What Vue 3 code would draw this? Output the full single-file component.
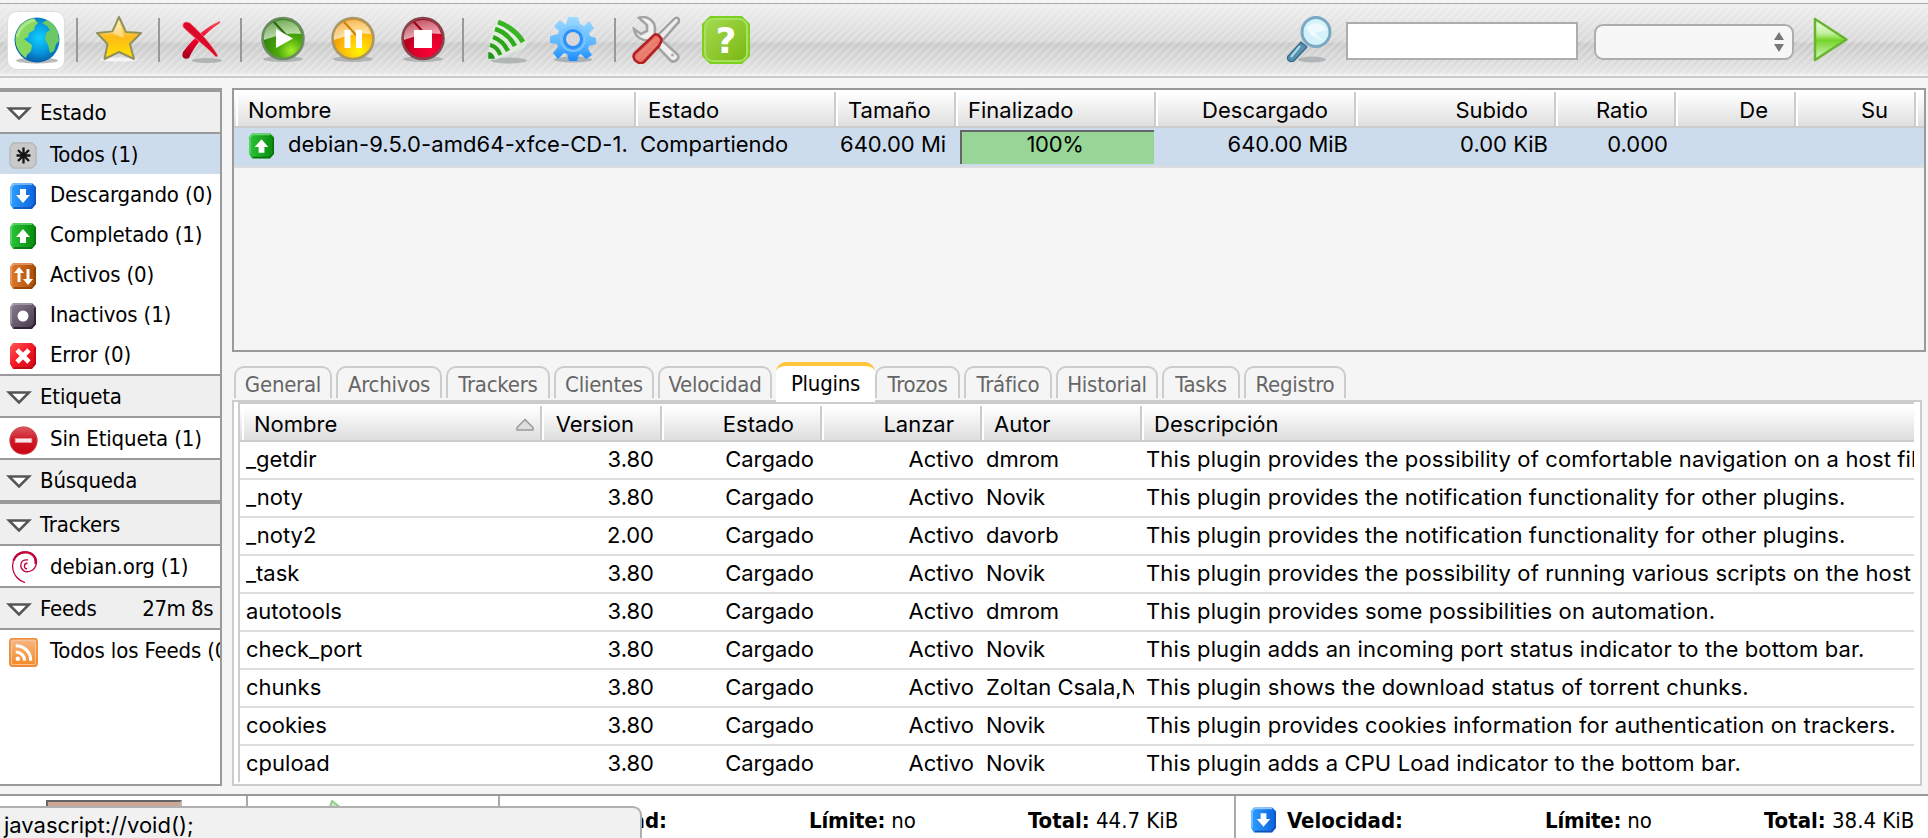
<script setup>
const states = [
  { label: 'Todos (1)', icon: 'all', active: true },
  { label: 'Descargando (0)', icon: 'down' },
  { label: 'Completado (1)', icon: 'up' },
  { label: 'Activos (0)', icon: 'both' },
  { label: 'Inactivos (1)', icon: 'idle' },
  { label: 'Error (0)', icon: 'error' },
]
const sections = [
  { title: 'Estado', rows: states },
  { title: 'Etiqueta', rows: [{ label: 'Sin Etiqueta (1)', icon: 'minus' }] },
  { title: 'Búsqueda', rows: [], empty: true },
  { title: 'Trackers', rows: [{ label: 'debian.org (1)', icon: 'debian' }] },
  { title: 'Feeds', extra: '27m 8s', rows: [{ label: 'Todos los Feeds (0)', icon: 'feed' }] },
]
const columns = [
  { t: 'Nombre' }, { t: 'Estado' }, { t: 'Tamaño', r: true }, { t: 'Finalizado' }, { t: 'Descargado', r: true },
  { t: 'Subido', r: true }, { t: 'Ratio', r: true }, { t: 'De', r: true }, { t: 'Su', r: true }, { t: '' },
]
const tabs = [
  ['General', 98], ['Archivos', 106], ['Trackers', 104], ['Clientes', 100], ['Velocidad', 114], ['Plugins', 99],
  ['Trozos', 85], ['Tráfico', 88], ['Historial', 102], ['Tasks', 78], ['Registro', 102],
]
const pluginColumns = [
  { t: 'Nombre', sort: true }, { t: 'Version', r: true }, { t: 'Estado', r: true }, { t: 'Lanzar', r: true },
  { t: 'Autor' }, { t: 'Descripción' },
]
const P = 'This plugin '
const plugins = [
  ['_getdir', '3.80', 'dmrom', P + 'provides the possibility of comfortable navigation on a host file system.'],
  ['_noty', '3.80', 'Novik', P + 'provides the notification functionality for other plugins.'],
  ['_noty2', '2.00', 'davorb', P + 'provides the notification functionality for other plugins.'],
  ['_task', '3.80', 'Novik', P + 'provides the possibility of running various scripts on the host system.'],
  ['autotools', '3.80', 'dmrom', P + 'provides some possibilities on automation.'],
  ['check_port', '3.80', 'Novik', P + 'adds an incoming port status indicator to the bottom bar.'],
  ['chunks', '3.80', 'Zoltan Csala,Novik', P + 'shows the download status of torrent chunks.'],
  ['cookies', '3.80', 'Novik', P + 'provides cookies information for authentication on trackers.'],
  ['cpuload', '3.80', 'Novik', P + 'adds a CPU Load indicator to the bottom bar.'],
]
</script>

<template>
  <div class="app">
    <svg class="defs" width="0" height="0">
      <defs>
        <radialGradient id="gGlobe" cx=".55" cy=".45" r=".6"><stop offset="0" stop-color="#10d0ff" /><stop offset=".55" stop-color="#0795dc" /><stop offset="1" stop-color="#04549c" /></radialGradient>
        <linearGradient id="gStar" x1="0" y1="0" x2="0" y2="1"><stop offset="0" stop-color="#ffe9a0" /><stop offset=".5" stop-color="#fdbb16" /><stop offset="1" stop-color="#ffe400" /></linearGradient>
        <linearGradient id="gRed" x1="0" y1="0" x2="0" y2="1"><stop offset="0" stop-color="#f05058" /><stop offset=".5" stop-color="#f4002c" /><stop offset="1" stop-color="#a00018" /></linearGradient>
        <radialGradient id="gPlay" cx=".7" cy=".8" r=".8"><stop offset="0" stop-color="#a4f028" /><stop offset=".4" stop-color="#4ba80c" /><stop offset="1" stop-color="#2b7a08" /></radialGradient>
        <radialGradient id="gPause" cx=".65" cy=".8" r=".8"><stop offset="0" stop-color="#fff400" /><stop offset=".45" stop-color="#ffc20a" /><stop offset="1" stop-color="#f08c00" /></radialGradient>
        <radialGradient id="gStop" cx=".7" cy=".8" r=".8"><stop offset="0" stop-color="#ff0038" /><stop offset=".5" stop-color="#dc0028" /><stop offset="1" stop-color="#9c0014" /></radialGradient>
        <linearGradient id="gGloss" x1="0" y1="0" x2=".3" y2="1"><stop offset="0" stop-color="#fff" stop-opacity=".3" /><stop offset="1" stop-color="#fff" stop-opacity=".7" /></linearGradient>
        <linearGradient id="gGear" x1="0" y1="0" x2="0" y2="1"><stop offset="0" stop-color="#9fdcff" /><stop offset=".6" stop-color="#5cb6ff" /><stop offset="1" stop-color="#1a8cff" /></linearGradient>
        <linearGradient id="gGo" x1="0" y1="0" x2="0" y2="1"><stop offset="0" stop-color="#f4fdec" /><stop offset=".35" stop-color="#c2f09c" /><stop offset=".52" stop-color="#74d428" /><stop offset="1" stop-color="#dcf8c8" /></linearGradient>
        <linearGradient id="gBlue" x1="0" y1="0" x2="1" y2="0"><stop offset="0" stop-color="#2fa0ff" /><stop offset="1" stop-color="#0a60dc" /></linearGradient>
        <linearGradient id="gGreen" x1="0" y1="0" x2="1" y2="0"><stop offset="0" stop-color="#2cc43a" /><stop offset="1" stop-color="#078a0c" /></linearGradient>
        <linearGradient id="gOrange" x1="0" y1="0" x2="1" y2="0"><stop offset="0" stop-color="#e07a28" /><stop offset="1" stop-color="#a84c08" /></linearGradient>
        <linearGradient id="gIdle" x1="0" y1="0" x2="1" y2="1"><stop offset="0" stop-color="#8c8090" /><stop offset="1" stop-color="#443848" /></linearGradient>
        <linearGradient id="gErr" x1="0" y1="0" x2="1" y2="1"><stop offset="0" stop-color="#ff5858" /><stop offset=".5" stop-color="#f41824" /><stop offset="1" stop-color="#c80814" /></linearGradient>
        <linearGradient id="gMinus" x1="0" y1="0" x2="0" y2="1"><stop offset="0" stop-color="#dc5860" /><stop offset=".45" stop-color="#d01c28" /><stop offset="1" stop-color="#cc0010" /></linearGradient>
        <linearGradient id="gFeed" x1="0" y1="0" x2="0" y2="1"><stop offset="0" stop-color="#f7b888" /><stop offset="1" stop-color="#f48820" /></linearGradient>
        <linearGradient id="gHandle" x1="0" y1="0" x2="1" y2="1"><stop offset="0" stop-color="#cc4040" /><stop offset=".5" stop-color="#ec8070" /><stop offset="1" stop-color="#c82828" /></linearGradient>

        <symbol id="i-all" viewBox="0 0 28 28"><path d="M4 1H23L27 5V22L23 26H4L1 22V5Z" fill="#c9c9c9" /><path d="M4 1H23L27 5V22L23 26H4L1 22V5Z" fill="none" stroke="#b8b8b8" stroke-width="1.5" /><path d="M14.500 5.500V21.500M9 8L20 19M20 8L9 19M7.500 13.500H21.500" stroke="#151515" stroke-width="2.300" /></symbol>
        <symbol id="i-down" viewBox="0 0 28 28"><path d="M4 1H23L27 5V22L23 27H4L1 22V5Z" fill="url(#gBlue)" /><path d="M2 22V5L5 2H23" fill="none" stroke="#8cc8f8" stroke-width="1.500" /><path d="M26 6V22L22 26H5" fill="none" stroke="#1450b8" stroke-width="1.500" /><path d="M11 7H17V13H21L14 21L7 13H11Z" fill="#fff" /></symbol>
        <symbol id="i-up" viewBox="0 0 28 28"><path d="M4 1H23L27 5V22L23 27H4L1 22V5Z" fill="url(#gGreen)" /><path d="M2 22V5L5 2H23" fill="none" stroke="#68d870" stroke-width="1.500" /><path d="M26 6V22L22 26H5" fill="none" stroke="#087010" stroke-width="1.500" /><path d="M11 21H17V15H21L14 7L7 15H11Z" fill="#fff" /></symbol>
        <symbol id="i-both" viewBox="0 0 28 28"><path d="M4 1H23L27 5V22L23 27H4L1 22V5Z" fill="url(#gOrange)" /><path d="M2 22V5L5 2H23" fill="none" stroke="#e8a070" stroke-width="1.500" /><path d="M26 6V22L22 26H5" fill="none" stroke="#884008" stroke-width="1.500" /><path d="M8.500 20H11.500V11H15L10 5L5 11H8.500ZM17.500 7H20.500V17H24L19 23L14 17H17.500Z" fill="#fff" /></symbol>
        <symbol id="i-idle" viewBox="0 0 28 28"><path d="M4 1H23L27 5V22L23 27H4L1 22V5Z" fill="url(#gIdle)" /><path d="M2 22V5L5 2H23" fill="none" stroke="#a8a0ac" stroke-width="1.500" /><path d="M26 6V22L22 26H5" fill="none" stroke="#302434" stroke-width="2" /><circle cx="14" cy="14" r="5.500" fill="#fff" /></symbol>
        <symbol id="i-error" viewBox="0 0 28 28"><path d="M4 1H23L27 5V22L23 27H4L1 22V5Z" fill="url(#gErr)" /><path d="M26 6V22L22 26H5" fill="none" stroke="#b80818" stroke-width="1.500" /><path d="M8 8L20 20M20 8L8 20" stroke="#fff" stroke-width="4.600" /></symbol>
        <symbol id="i-minus" viewBox="0 0 28 28"><circle cx="14" cy="14" r="13.500" fill="url(#gMinus)" /><circle cx="14" cy="14" r="13" fill="none" stroke="#c05058" stroke-opacity=".6" /><rect x="6" y="12" width="16" height="4" fill="#f8e8e8" stroke="#e89098" stroke-width=".8" /></symbol>
        <symbol id="i-debian" viewBox="0 0 28 32"><path d="M17 18C13.500 17.500 13.500 12.500 17.500 12M10.800 14C10.500 19.500 16 22 20.500 20C27 17.500 28 9 24.500 5C20 -.5 10 -.5 5.500 5.500C1 11.500 2 21 7 26.500C9 29 12 30.500 15 31.500M10.800 14C11 10 14 8.300 18 9" fill="none" stroke="#c4003c" stroke-width="1.300" /><path d="M25.500 13C26.500 7 23 1.800 16 1.300C10 1 5.500 4.500 3.500 9.500" fill="none" stroke="#c4003c" stroke-width="2.300" /></symbol>
        <symbol id="i-feed" viewBox="0 0 28 28"><rect x=".8" y=".8" width="26.400" height="26.400" rx="2.500" fill="url(#gFeed)" stroke="#ec8c3c" stroke-width="1.500" /><rect x="2.500" y="2.500" width="23" height="23" rx="1" fill="none" stroke="#f8c498" stroke-width="1" /><circle cx="8.500" cy="20" r="2.200" fill="#fff" /><path d="M6.500 13.500C11 13.500 15 17 15 22M6.500 7.500C15 7.500 21 14 21 22" fill="none" stroke="#fff" stroke-width="3" /></symbol>
      </defs>
    </svg>

    <header class="toolbar">
      <div class="tool current">
        <svg width="46" height="48" viewBox="0 0 46 48"><ellipse cx="23" cy="43.500" rx="21" ry="3" fill="#a8a8a8" opacity=".8" /><circle cx="23" cy="23" r="22.500" fill="url(#gGlobe)" /><path d="M9 6C13 3 17 1.500 20 1.500L24 6L21 9L20 13L15 16L14 20L10 22L14 25L18 28L17 34L13 38L12 41C5 37 1 29 1.500 21C2 15 5 9 9 6Z" fill="#86d860" /><path d="M33 3C39 6 42 10 44 16L45 24L42 27L40 34L36 36L34 28L31 22L32 16L36 13L33 9L28 6Z" fill="#6cc864" /><path d="M3 20C6 10 14 4 21 3" stroke="#d8f4a8" stroke-width="3" fill="none" opacity=".5" /></svg>
      </div>
      <i class="sep s1"></i>
      <svg class="t-star" width="46" height="48" viewBox="0 0 46 48"><ellipse cx="23" cy="43.500" rx="19" ry="2" fill="#fff" opacity=".7" /><path d="M23 1L30 16L45 17L34 28L38 43L23 36L8.500 43L11.500 28L1 17L16.500 15.500Z" fill="url(#gStar)" stroke="#92905a" stroke-width="2" stroke-linejoin="round" /><path d="M23 4L28 22L16 17L4 18L17 16Z" fill="#fff" opacity=".4" /></svg>
      <i class="sep s2"></i>
      <svg class="t-x" width="42" height="44" viewBox="0 0 42 44"><ellipse cx="26" cy="41.500" rx="15" ry="2.500" fill="#b0b4b4" /><path d="M39 2C27 7 13 18 2 33C0 38 3 41 8 39C13 28 23 14 39 4Z" fill="url(#gRed)" /><path d="M2 5C4 2 8 3 10 5C20 14 31 26 37 37L35 38C26 28 13 19 2 8Z" fill="#dc0828" stroke="#f08088" stroke-width=".8" /></svg>
      <i class="sep s3"></i>
      <svg class="t-play" width="46" height="48" viewBox="0 0 46 48"><ellipse cx="23" cy="43" rx="20" ry="3" fill="#b0b4b4" /><circle cx="23" cy="22.500" r="20.500" fill="url(#gPlay)" stroke="#6c8a60" stroke-width="2.500" /><path d="M4 24C3 11 13 4 24 4C34 5 39 10 41 18C28 16 15 20 4 24Z" fill="url(#gGloss)" /><path d="M14 6L26 19" stroke="#286810" stroke-width="2" /><path d="M16 13V32L33 22.500Z" fill="#fff" /></svg>
      <svg class="t-pause" width="46" height="48" viewBox="0 0 46 48"><ellipse cx="23" cy="43" rx="20" ry="3" fill="#b0b4b4" /><circle cx="23" cy="22.500" r="20.500" fill="url(#gPause)" stroke="#a89868" stroke-width="2.500" /><path d="M4 24C3 11 13 4 24 4C34 5 39 10 41 18C28 16 15 20 4 24Z" fill="url(#gGloss)" /><path d="M14 6L26 19" stroke="#c88010" stroke-width="2" /><path d="M14.500 14H20.500V32H14.500ZM26 14H32V32H26Z" fill="#fff" /></svg>
      <svg class="t-stop" width="46" height="48" viewBox="0 0 46 48"><ellipse cx="23" cy="43" rx="20" ry="3" fill="#b0b4b4" /><circle cx="23" cy="22.500" r="20.500" fill="url(#gStop)" stroke="#88444c" stroke-width="2.500" /><path d="M4 24C3 11 13 4 24 4C34 5 39 10 41 18C28 16 15 20 4 24Z" fill="url(#gGloss)" /><path d="M14 6L26 19" stroke="#980018" stroke-width="2" /><path d="M14 14H32V32H14Z" fill="#fff" /></svg>
      <i class="sep s4"></i>
      <svg class="t-rss" width="42" height="46" viewBox="0 0 42 46"><ellipse cx="22" cy="42.500" rx="18" ry="3" fill="#b0b6b4" /><path d="M11 0L41 23L37 30L8 42L1 40L3 22Z" fill="#e4f4e0" opacity=".7" /><path d="M11 4C20 7 31 15 36 24" fill="none" stroke="#38b424" stroke-width="5" /><path d="M8 11C15 13 23 19 28 28" fill="none" stroke="#30ac1e" stroke-width="4.600" /><path d="M6 19C12 21 17 25 21 33" fill="none" stroke="#2ca41a" stroke-width="4.400" /><path d="M3 27C8 28 11 31 13.500 37" fill="none" stroke="#2aa018" stroke-width="4" /><path d="M2 35C5 35 6 37 7 40L2 40Z" fill="#20941a" stroke="#20941a" stroke-width="1.500" /></svg>
      <svg class="t-gear" width="46" height="48" viewBox="0 0 46 48"><ellipse cx="23" cy="43.500" rx="19" ry="3" fill="#a8b0b8" /><path d="M18 1H28L30 8L34 10L39 5L44 12L39 17L40 20L46 22V28L39 30L38 33L42 39L36 43L31 38L29 39L27 45H19L17 38L14 37L8 43L3 37L8 31L7 28L0 27V20L8 18L9 15L4 10L10 4L16 9Z" fill="url(#gGear)" /><circle cx="23" cy="23" r="8.500" fill="#d8d8d8" stroke="#2a90fa" stroke-width="3" /><circle cx="23" cy="23" r="12" fill="none" stroke="#78c4ff" stroke-width="2" /></svg>
      <i class="sep s5"></i>
      <svg class="t-tools" width="48" height="48" viewBox="0 0 48 48"><path d="M7 2C14 -1 23 4 23 13C23 16 22 17 24 19L45 38C49 42 43 47 39 45L19 24C11 26 3 21 2 13L9 18L15 15L15 9Z" fill="#f0f0f0" stroke="#a4a4a4" stroke-width="2.600" /><path d="M26 19L38 7L42 3C46 -1 49 5 45 8L31 24Z" fill="#ececec" stroke="#a0a0a0" stroke-width="2.400" /><circle cx="40.500" cy="39" r="1.500" fill="#aaa" /><path d="M22 19C25 17 31 22 29 26L27 30L12 46C7 50 -2 42 3 37L17 24Z" fill="url(#gHandle)" stroke="#b42024" stroke-width="2.600" /><path d="M6 39L22 24M10 43L25 28" stroke="#e88878" stroke-width="1.500" /></svg>
      <div class="help"><span>?</span></div>
      <svg class="t-mag" width="46" height="48" viewBox="0 0 46 48"><ellipse cx="25" cy="43.500" rx="14" ry="3" fill="#b0b6b8" /><path d="M14 26L20 31L7 45C3 47 -1 44 1 40Z" fill="#5490b0" stroke="#346884" stroke-width="1.200" /><path d="M13 30L4 41" stroke="#b0d8e8" stroke-width="2" /><ellipse cx="29" cy="16" rx="14" ry="14.500" fill="#d4f2fa" stroke="#78a8c4" stroke-width="3" /><path d="M19 12C26 4 36 7 40 14L28 17L36 25L24 19Z" fill="#fff" opacity=".6" /></svg>
      <div class="search"></div>
      <div class="select"><svg width="12" height="20" viewBox="0 0 12 20"><path d="M6 0L11 8H1ZM6 20L1 12H11Z" fill="#777" /></svg></div>
      <svg class="t-go" width="36" height="46" viewBox="0 0 36 46"><path d="M2 2L33.500 22.500L2 43Z" fill="url(#gGo)" stroke="#68b430" stroke-width="2.500" stroke-linejoin="round" /></svg>
    </header>

    <main class="body">
      <aside class="side">
        <section v-for="s in sections" :key="s.title" :class="{ empty: s.empty }">
          <h3>
            <svg width="26" height="16" viewBox="0 0 26 16"><path d="M3 2.500H23L13 12.500Z" fill="#fff" stroke="#555" stroke-width="2.500" /></svg>
            <span>{{ s.title }}</span><em v-if="s.extra">{{ s.extra }}</em>
          </h3>
          <ul v-if="s.rows.length">
            <li v-for="r in s.rows" :key="r.label" :class="{ active: r.active }">
              <svg :class="'ic ic-' + r.icon"><use :href="'#i-' + r.icon" /></svg><span>{{ r.label }}</span>
            </li>
          </ul>
        </section>
      </aside>

      <div class="content">
        <section class="torrents">
          <div class="thead grid-t"><div v-for="(c, i) in columns" :key="i" :class="{ r: c.r }">{{ c.t }}</div></div>
          <div class="trow grid-t">
            <div class="name"><svg class="row-ic"><use href="#i-up" /></svg><span>debian-9.5.0-amd64-xfce-CD-1.</span></div>
            <div>Compartiendo</div>
            <div>640.00 Mi</div>
            <div class="prog"><b>100%</b></div>
            <div class="r">640.00 MiB</div>
            <div class="r">0.00 KiB</div>
            <div class="r">0.000</div>
            <div></div><div></div><div></div>
          </div>
        </section>

        <nav class="tabs">
          <a v-for="t in tabs" :key="t[0]" :class="{ on: t[0] === 'Plugins' }" :style="{ width: t[1] + 'px' }">{{ t[0] }}</a>
        </nav>
        <section class="pane">
          <div class="inner">
            <div class="thead grid-p">
              <div v-for="c in pluginColumns" :key="c.t" :class="{ r: c.r }">{{ c.t }}<svg v-if="c.sort" width="20" height="14" viewBox="0 0 20 14"><path d="M10 1.500L18 9.500V12H2V9.500Z" fill="#ddd" stroke="#999" stroke-width="1.500" /></svg></div>
            </div>
            <div v-for="p in plugins" :key="p[0]" class="prow grid-p">
              <div>{{ p[0] }}</div><div class="r">{{ p[1] }}</div><div class="r">Cargado</div><div class="r">Activo</div>
              <div>{{ p[2] }}</div><div>{{ p[3] }}</div>
            </div>
          </div>
        </section>
      </div>
    </main>

    <footer class="status">
      <div class="cell c1"><i class="bar"></i></div>
      <div class="cell c2"><svg width="30" height="20" viewBox="0 0 30 20"><path d="M2 18L8 1L22 12L28 9V20H2Z" fill="#c8e8c4" stroke="#90cc90" stroke-width="2" /></svg></div>
      <div class="cell c3"><svg class="st-ic"><use href="#i-up" /></svg><span class="v"><b>Velocidad:</b></span><span class="l"><b>Límite:</b> no</span><span class="t"><b>Total:</b> 44.7 KiB</span></div>
      <div class="cell c4"><svg class="st-ic"><use href="#i-down" /></svg><span class="v"><b>Velocidad:</b></span><span class="l"><b>Límite:</b> no</span><span class="t"><b>Total:</b> 38.4 KiB</span></div>
      <div class="popup">javascript://void();</div>
    </footer>
  </div>
</template>

<style>
body { margin: 0; background: #f5f5f5; }
</style>
<style scoped>
* { box-sizing: border-box; }
.app { width: 1928px; height: 838px; overflow: hidden; display: flex; flex-direction: column; background: #f5f5f5; color: #000; font: 22px/28px "DejaVu Sans Condensed", "DejaVu Sans", sans-serif; font-stretch: condensed; white-space: nowrap; }
.defs { position: absolute; }
.toolbar { flex: none; margin-top: 3px; height: 75px; border-top: 1px solid #aaa; border-bottom: 2px solid #ccc; display: flex; align-items: flex-start;
  background: linear-gradient(transparent 70px, #f2f2f2 70px), repeating-linear-gradient(135deg, rgba(255,255,255,0) 0 2.800px, rgba(255,255,255,.24) 3.600px 5px, rgba(255,255,255,0) 5.660px), linear-gradient(#efefef 0, #d8d8d8 38px, #cacaca 39px, #e6e6e6 70px); }
.toolbar svg, .toolbar .sep, .help, .search, .select { flex: none; }
.tool.current { width: 58px; height: 59px; margin: 7px 0 0 7px; padding: 5px 6px; background: #fff; border: 1px solid #ddd; border-radius: 10px; flex: none; }
.tool svg { display: block; }
.sep { width: 2px; height: 44px; background: #999; margin-top: 14px; }
.s1 { margin-left: 11px; }
.t-star { margin: 12px 0 0 18px; }
.s2 { margin-left: 16px; }
.t-x { margin: 15px 0 0 21px; }
.s3 { margin-left: 17px; }
.t-play { margin: 12px 0 0 18px; }
.t-pause, .t-stop { margin: 12px 0 0 24px; }
.s4 { margin-left: 16px; }
.t-rss { margin: 14px 0 0 23px; }
.t-gear { margin: 12px 0 0 21px; }
.s5 { margin-left: 18px; }
.t-tools { margin: 12px 0 0 16px; }
.help { width: 48px; height: 48px; margin: 12px 0 0 22px; background: #7cd020; clip-path: polygon(8px 0, 40px 0, 48px 8px, 48px 40px, 40px 48px, 8px 48px, 0 40px, 0 8px); display: flex; padding: 2px; }
.help span { flex: 1; border-radius: 9px; background: linear-gradient(135deg, #a4da50, #7cb812); border: 2px solid #a8e060; color: #fff; font: bold 36px/42px "DejaVu Sans", sans-serif; text-align: center; }
.t-mag { margin: 12px 0 0 537px; }
.search { width: 232px; height: 38px; margin: 18px 0 0 13px; background: #fff; border: 2px solid #adadad; }
.select { width: 200px; height: 36px; margin: 20px 0 0 16px; border: 2px solid #adadad; border-radius: 9px; background: #f7f7f7; display: flex; justify-content: flex-end; padding: 6px 7px; }
.t-go { margin: 13px 0 0 19px; }

.body { height: 716px; padding-top: 10px; display: flex; gap: 10px; flex: none; }
.side { width: 222px; height: 698px; border-top: 2px solid #9a9a9a; border-right: 2px solid #9a9a9a; border-bottom: 2px solid #9a9a9a; background: #fff; overflow: hidden; letter-spacing: -.15px; }
.side section { border-top: 2px solid #9a9a9a; }
h3 { margin: 0; height: 42px; border-bottom: 2px solid #9a9a9a; background: #efefef; font: inherit; display: flex; align-items: center; padding: 0 7px 0 6px; }
h3 span { margin: 2px 0 0 8px; flex: 1; }
h3 em { font-style: normal; margin-top: 2px; letter-spacing: -.5px; }
h3 svg { margin-top: 4px; }
ul { margin: 0; padding: 0; list-style: none; }
li { height: 40px; display: flex; align-items: center; padding-left: 9px; overflow: hidden; }
li.active { background: #cddcec; }
li span { margin: 2px 0 0 14px; }
.ic { width: 28px; height: 28px; margin: 3px -1px 0 0; flex: none; }
.ic-minus, .ic-feed { width: 29px; height: 29px; margin-right: -2px; margin-top: 4px; }
.ic-debian { width: 28px; height: 32px; margin: 2px -2px 0 1px; }

.content { flex: 1; width: 1696px; display: flex; flex-direction: column; font-family: Inter, Roboto, sans-serif; font-stretch: normal; font-size: 22px; }
.torrents { width: 1694px; height: 264px; border: 2px solid #9a9a9a; overflow: hidden; }
.thead { height: 38px; padding-left: 2px; background: linear-gradient(#fff 2px, #fcfcfc 6px, #dedede 36px); border-bottom: 2px solid #ccc; }
.thead > div { margin-top: 2px; border-right: 2px solid #ccc; box-shadow: inset 2px 0 #fff; padding: 3px 0 0 12px; height: 34px; overflow: hidden; line-height: 30px; position: relative; }
.thead > div.r { padding-right: 26px; text-align: right; }
.thead svg { position: absolute; right: 5px; top: 12px; }
.grid-t { display: grid; grid-template-columns: 400px 200px 120px 200px 200px 200px 120px 120px 120px 8px; }
.grid-p { display: grid; grid-template-columns: 300px 120px 160px 160px 160px 772px; }
.trow { height: 40px; padding-left: 2px; background: #cddcec; border-bottom: 2px solid #ddd; line-height: 32px; }
.trow > div { overflow: hidden; padding: 0 8px 0 4px; }
.trow .r, .prow .r { text-align: right; }
.trow .name { display: flex; padding: 0 0 0 12px; letter-spacing: .08px; }
.name span { margin-left: 13px; }
.row-ic { width: 27px; height: 28px; flex: none; margin-top: 4px; }
.trow .prog { margin: 2px 2px 2px 4px; padding: 0 6px 0 0; border: 2px solid #666; border-width: 2px 0 0 2px; background: #98d698; line-height: 25px; text-align: center; }
.prog b { font-weight: 400; letter-spacing: -.3px; }

.tabs { height: 50px; padding: 14px 0 0 2px; display: flex; gap: 4px; flex: none; font-family: "DejaVu Sans Condensed", "DejaVu Sans", sans-serif; font-stretch: condensed; color: #666; letter-spacing: -.25px; }
.tabs a { height: 32px; flex: none; border: 2px solid #ccc; border-bottom: 0; border-radius: 10px 10px 0 0; text-align: center; line-height: 34px; }
.tabs a.on { margin: -4px -4px 0 0; height: 40px; background: #fff; color: #000; border-width: 4px 0 0; border-color: #ffc63c; position: relative; line-height: 35px; }
.pane { margin-top: -2px; width: 1690px; height: 386px; border: 2px solid #ccc; padding-left: 4px; padding-right: 6px; background: #fff; }
.inner { height: 380px; border-left: 2px solid #ccc; border-top: 2px solid #ccc; overflow: hidden; }
.inner .thead > div:last-child { border: 0; }
.prow { height: 38px; padding-left: 2px; border-bottom: 2px solid #ddd; line-height: 34px; }
.prow > div { overflow: hidden; margin: 0 8px 0 4px; }
.prow > div:last-child { margin-right: 0; letter-spacing: .14px; }

.status { position: relative; height: 44px; border-top: 2px solid #9a9a9a; background: #fff; display: flex; flex: none; }
.cell { border-right: 2px solid #aaa; display: flex; align-items: center; }
.c1 { width: 248px; align-items: flex-start; padding: 4px 0 0 46px; }
.bar { width: 136px; height: 30px; background: #cca894; border: 2px solid #666; border-right-color: #bbb; }
.c2 { width: 252px; align-items: flex-start; padding: 4px 0 0 76px; }
.c3 { width: 736px; padding-top: 7px; }
.c4 { width: 692px; border: 0; padding-top: 7px; }
.cell span { display: block; }
.st-ic { width: 27px; height: 28px; margin: -1px -1px 0 14px; flex: none; }
.cell .v { width: 258px; margin-left: 11px; }
.cell .l { width: 219px; letter-spacing: -.2px; }
.popup { position: absolute; left: 0; top: 10px; width: 642px; height: 40px; background: #f1f1f1; border: 2px solid #b0b0b0; border-width: 2px 2px 0 0; border-radius: 0 9px 0 0; padding: 3px 0 0 4px; font-family: Inter, Roboto, sans-serif; font-stretch: normal; }
</style>
